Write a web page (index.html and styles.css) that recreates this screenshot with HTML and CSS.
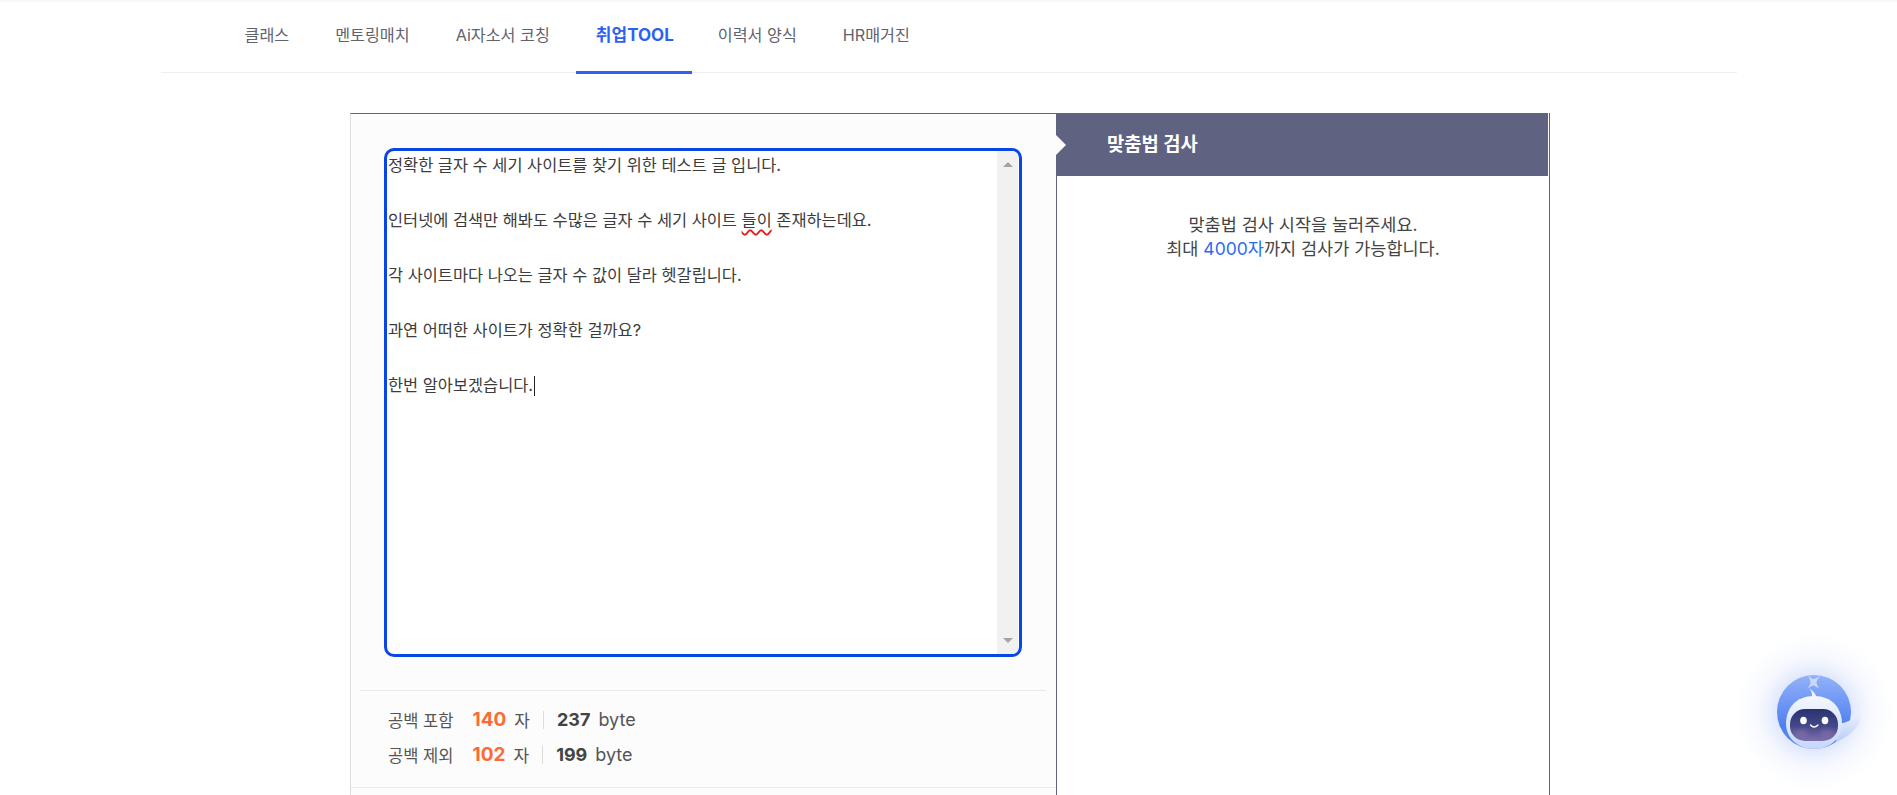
FILE: index.html
```html
<!DOCTYPE html>
<html lang="ko">
<head>
<meta charset="utf-8">
<title>맞춤법 검사</title>
<link rel="stylesheet" href="styles.css">
</head>
<body>
<header class="top">
  <nav class="nav">
    <a class="nav-item">클래스</a>
    <a class="nav-item">멘토링매치</a>
    <a class="nav-item">Ai자소서 코칭</a>
    <a class="nav-item active">취업TOOL</a>
    <a class="nav-item">이력서 양식</a>
    <a class="nav-item">HR매거진</a>
  </nav>
</header>
<main class="tool">
  <section class="left">
    <div class="editor">
      <div class="editor-text">정확한 글자 수 세기 사이트를 찾기 위한 테스트 글 입니다.

인터넷에 검색만 해봐도 수많은 글자 수 세기 사이트 <span class="misspelled">들이</span> 존재하는데요.

각 사이트마다 나오는 글자 수 값이 달라 헷갈립니다.

과연 어떠한 사이트가 정확한 걸까요?

한번 알아보겠습니다.<span class="caret"></span></div>
      <div class="scrollbar">
        <span class="arrow-up"></span>
        <span class="arrow-down"></span>
      </div>
    </div>
    <div class="stats">
      <div class="stat-row">
        <span class="stat-label">공백 포함</span>
        <strong class="stat-count">140</strong>
        <span class="stat-unit">자</span>
        <span class="stat-sep"></span>
        <strong class="stat-bytes">237</strong>
        <span class="stat-byte">byte</span>
      </div>
      <div class="stat-row">
        <span class="stat-label">공백 제외</span>
        <strong class="stat-count">102</strong>
        <span class="stat-unit">자</span>
        <span class="stat-sep"></span>
        <strong class="stat-bytes">199</strong>
        <span class="stat-byte">byte</span>
      </div>
    </div>
    <div class="left-foot"></div>
  </section>
  <section class="right">
    <div class="right-head"><h2 class="right-title">맞춤법 검사</h2></div>
    <p class="right-msg">맞춤법 검사 시작을 눌러주세요.<br>최대 <span class="limit">4000자</span>까지 검사가 가능합니다.</p>
  </section>
</main>
<div class="bot" aria-label="챗봇">
  <svg width="160" height="160" viewBox="-10 -10 160 160" xmlns="http://www.w3.org/2000/svg">
    <defs>
      <radialGradient id="glow">
        <stop offset="0.4" stop-color="#7f9ff5" stop-opacity="0.3"/>
        <stop offset="0.7" stop-color="#a9bff8" stop-opacity="0.1"/>
        <stop offset="1" stop-color="#c5d4fb" stop-opacity="0"/>
      </radialGradient>
      <linearGradient id="disc" x1="0" y1="0" x2="0" y2="1">
        <stop offset="0" stop-color="#93b2f9"/>
        <stop offset="0.7" stop-color="#4f7ff0"/>
        <stop offset="1" stop-color="#5c86ef"/>
      </linearGradient>
      <linearGradient id="shell" x1="0" y1="0" x2="0" y2="1">
        <stop offset="0" stop-color="#f4f7ff"/>
        <stop offset="1" stop-color="#c6d7fb"/>
      </linearGradient>
      <linearGradient id="wing" x1="0" y1="0" x2="0" y2="1">
        <stop offset="0" stop-color="#e9effe"/>
        <stop offset="1" stop-color="#b9cdfa"/>
      </linearGradient>
      <linearGradient id="face" x1="0" y1="0" x2="0" y2="1">
        <stop offset="0" stop-color="#28336f"/>
        <stop offset="0.55" stop-color="#46488c"/>
        <stop offset="1" stop-color="#7c70ac"/>
      </linearGradient>
      <filter id="soft" x="-30%" y="-30%" width="160%" height="160%"><feGaussianBlur stdDeviation="2"/></filter>
    </defs>
    <circle cx="70" cy="70" r="80" fill="url(#glow)"/>
    <circle cx="70" cy="70" r="37" fill="url(#disc)"/>
    <path d="M64 33 Q67.500 37 69.500 37 Q71 37 76 34 Q72.500 38.500 72.500 40.500 Q72.500 42.500 75.500 47 Q71 43.500 69.500 43.500 Q67.500 43.500 63 47 Q66.500 42.500 66.500 40.500 Q66.500 38.500 64 33Z" fill="#c9d8fb"/>
    <path d="M68 56 Q68.500 50 65.500 46.500 Q71 50 73 56Z" fill="#eef3ff"/>
    <path d="M94 82 Q107 80 113 73 Q118 71 116 78 Q111 92 92 100Z" fill="url(#wing)"/>
    <path d="M70 54 C88 54 98 66 98 82 C98 96 86 107 70 107 C54 107 42 96 42 82 C42 66 52 54 70 54Z" fill="url(#shell)"/>
    <rect x="46" y="67" width="48" height="32" rx="15" fill="url(#face)"/>
    <ellipse cx="57" cy="91" rx="7" ry="4" fill="#a77fb6" opacity="0.35" filter="url(#soft)"/>
    <ellipse cx="83" cy="91" rx="7" ry="4" fill="#a77fb6" opacity="0.35" filter="url(#soft)"/>
    <ellipse cx="59.500" cy="78.500" rx="3.300" ry="3.800" fill="#ffffff"/>
    <ellipse cx="81" cy="78.500" rx="3.300" ry="3.800" fill="#ffffff"/>
    <path d="M66.500 83 Q70 87 74 83" fill="none" stroke="#ffffff" stroke-width="1.300" stroke-linecap="round"/>
  </svg>
</div>
</body>
</html>
```
FILE: styles.css
```css
* { box-sizing: border-box; }
html, body { margin: 0; padding: 0; height: 795px; overflow: hidden; background: #fff; }
body { font-family: Inter, "Noto Sans CJK KR", sans-serif; color: #444; }

.top { border-top: 2px solid #f7f7f8; }
.nav {
  display: flex;
  gap: 5px;
  width: 1576px;
  height: 71px;
  margin-left: 161px;
  padding-left: 63px;
  border-bottom: 1px solid #eeeef6;
}
.nav-item {
  position: relative;
  display: block;
  height: 70px;
  padding: 0 20.500px;
  font-size: 16.200px;
  line-height: 66px;
  color: #5f636e;
  white-space: nowrap;
}
.nav-item.active {
  margin-left: 1px;
  padding: 0 18.500px 0 19.500px;
  color: #2b63f0;
  font-size: 17px;
  font-weight: 700;
}
.nav-item.active::after {
  content: "";
  position: absolute;
  left: 0;
  right: 0;
  top: 69px;
  height: 3px;
  background: #2b63f0;
}

.tool { display: flex; width: 1200px; margin: 40px 0 0 350px; height: 800px; }

.left {
  width: 706px;
  padding-top: 34px;
  background: #fcfcfc;
  border-top: 1px solid #666;
  border-left: 1px solid #ddd;
}
.editor {
  display: flex;
  width: 638px;
  height: 509px;
  margin-left: 33px;
  padding-right: 1px;
  background: #fff;
  border: 3px solid #0a46e6;
  border-radius: 10px;
  overflow: hidden;
}
.editor-text {
  flex: 1;
  padding: 1px 0 0 1px;
  font-size: 16.400px;
  line-height: 27.450px;
  color: #3c3c3c;
  white-space: pre-wrap;
}
.misspelled { text-decoration: underline wavy #e02020 1.500px; text-underline-offset: 3px; }
.caret {
  display: inline-block;
  width: 1px;
  height: 20px;
  margin-left: 1px;
  vertical-align: -5px;
  background: #222;
}
.scrollbar {
  display: flex;
  flex-direction: column;
  justify-content: space-between;
  align-items: center;
  width: 21px;
  padding: 11px 0;
  background: #f1f1f1;
}
.arrow-up, .arrow-down { width: 0; height: 0; border-left: 5px solid transparent; border-right: 5px solid transparent; }
.arrow-up { border-bottom: 5px solid #a3a3a3; }
.arrow-down { border-top: 5px solid #a3a3a3; }

.stats {
  margin: 33px 10px 0 9px;
  padding: 11px 0 0 28px;
  border-top: 1px solid #eaeaea;
  height: 97px;
}
.stat-row { display: flex; align-items: center; height: 35px; font-size: 16px; color: #444; }
.stat-label { width: 84.500px; font-size: 16.500px; color: #555; }
.stat-count { margin-right: 8px; font-size: 19px; font-weight: 700; color: #ff6a33; }
.stat-unit { margin-right: 13px; font-size: 17px; color: #555; }
.stat-sep { width: 1px; height: 18px; margin-right: 13px; background: #ddd; }
.stat-bytes { margin-right: 8px; font-size: 18px; font-weight: 700; color: #444; }
.stat-byte { font-size: 18px; color: #555; }
.left-foot { border-top: 1px solid #eaeaea; }

.right {
  width: 494px;
  border-left: 1px solid #5f6280;
  border-right: 1px solid #5f6280;
  background: #fff;
}
.right-head {
  position: relative;
  display: flex;
  align-items: center;
  height: 63px;
  margin-right: 1px;
  margin-left: -1px;
  padding: 0 0 4px 51px;
  background: #5f6280;
}
.right-head::before {
  content: "";
  position: absolute;
  left: 0;
  top: 22px;
  border-left: 10px solid #fcfcfc;
  border-top: 10px solid transparent;
  border-bottom: 10px solid transparent;
}
.right-title { margin: 0; font-size: 18.800px; font-weight: 700; color: #fff; }
.right-msg {
  margin: 37px 0 0;
  font-size: 17.500px;
  line-height: 24px;
  text-align: center;
  color: #444;
}
.limit { color: #2b6cf0; }

.bot { position: fixed; left: 1734px; top: 632px; width: 160px; height: 160px; }
.bot svg { display: block; }
```
